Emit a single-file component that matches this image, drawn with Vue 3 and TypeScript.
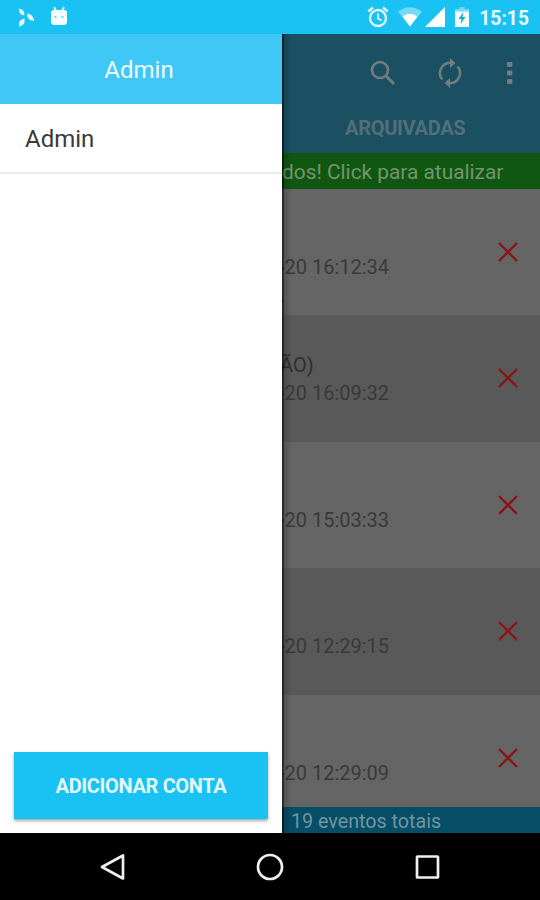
<script setup lang="ts">
interface EventRow {
  title: string
  date: string
  note: string
}

const events: EventRow[] = [
  { title: '', date: '-20 16:12:34', note: '.' },
  { title: 'ÃO)', date: '-20 16:09:32', note: '' },
  { title: '', date: '-20 15:03:33', note: '' },
  { title: '', date: '-20 12:29:15', note: '' },
  { title: '', date: '-20 12:29:09', note: '' },
]
</script>

<template>
  <div class="screen">
    <header class="status">
      <svg class="pinwheel" viewBox="0 0 17 19" width="17" height="19" fill="#e2f8ff">
        <path d="M.8 .5L4 1.500Q6.800 3.500 6.300 7.500L3 6.500Q.8 4.500 .8 .5Z" />
        <path d="M9 5.500L12.500 6.500Q16 9 16 13L12.500 12.300Q9 10 9 5.500Z" />
        <path d="M1 18.500V14.500Q2.500 11 6.500 10.500V14.500Q5 18 1 18.500Z" />
      </svg>
      <svg class="robot" viewBox="0 0 18 20" width="18" height="20">
        <path d="M4 1l2 4M14 1l-2 4" stroke="#c8f2ff" stroke-width="2" />
        <path d="M1 6.500Q1 4 4 4H14Q17 4 17 6.500V15.500Q17 19 13.500 19H4.500Q1 19 1 15.500Z" fill="#f4fdff" />
        <circle cx="5.500" cy="11" r="1.100" fill="#5ccff2" />
        <circle cx="12.500" cy="11" r="1.100" fill="#5ccff2" />
      </svg>
      <div class="status-right">
        <svg viewBox="0 0 22 22" width="22" height="22" fill="none" stroke="#e2f8ff">
          <circle cx="11" cy="12" r="8" stroke-width="2.300" />
          <path d="M11 7.500v5l3.500 2" stroke-width="1.800" />
          <path d="M1.300 5.500L6 1.500M20.700 5.500L16 1.500" stroke-width="2.400" />
        </svg>
        <svg class="wifi" viewBox="0 0 24 20" width="24" height="20">
          <path d="M0 4.500Q12-4 24 4.500L12 19.500Z" fill="#75daf8" />
          <path d="M4.500 9.500Q12 4 19.500 9.500L12 19.500Z" fill="#fff" />
        </svg>
        <svg class="signal" viewBox="0 0 20 20" width="20" height="20">
          <path d="M20 0V20H0Z" fill="#fff" />
        </svg>
        <svg class="battery" viewBox="0 0 14 20" width="14" height="20">
          <path d="M4.500 0h5v2H14V6H0V2h4.500Z" fill="#75daf8" />
          <path d="M0 4.500H14V20H0Z" fill="#f4fdff" />
          <path d="M8.500 5L3.500 12H6.500L5.500 17L10.500 10H7.500Z" fill="#19a9d5" />
        </svg>
        <span class="clock">15:15</span>
      </div>
    </header>

    <main class="body">
      <aside class="drawer">
        <div class="drawer-head">Admin</div>
        <div class="account">Admin</div>
        <div class="grow"></div>
        <button class="add">ADICIONAR CONTA</button>
      </aside>

      <section class="content">
        <div class="toolbar">
          <div class="actions">
            <svg class="search" viewBox="0 0 26 26" width="26" height="26" fill="none" stroke="#727d80">
              <circle cx="10" cy="10" r="8" stroke-width="2.600" />
              <path d="M15.500 15.500L24 24" stroke-width="3" />
            </svg>
            <svg class="sync" viewBox="0 0 24 30" width="24" height="30">
              <g fill="none" stroke="#727d80" stroke-width="2.600">
                <path d="M4.300 21.500A10.300 10.300 0 0 1 12 4.700H14" />
                <path d="M19.700 8.500A10.300 10.300 0 0 1 12 25.300H10" />
              </g>
              <path d="M12 0L17.500 4.900L12 10ZM12 20L6.500 25.100L12 30Z" fill="#727d80" />
            </svg>
            <svg class="more" viewBox="0 0 6 22" width="6" height="22" fill="#727d80">
              <rect width="5.400" height="5" rx="1" />
              <rect y="8.500" width="5.400" height="5" rx="1" />
              <rect y="17" width="5.400" height="5" rx="1" />
            </svg>
          </div>
          <div class="tab">ARQUIVADAS</div>
        </div>
        <div class="notice">dos! Click para atualizar</div>
        <div class="list">
          <div v-for="event in events" :key="event.date" class="row">
            <div class="text">
              <div class="line title">{{ event.title }}</div>
              <div class="line date">{{ event.date }}</div>
              <div class="line note">{{ event.note }}</div>
            </div>
            <svg viewBox="0 0 20 20" width="20" height="20" fill="none" stroke="#8a1518" stroke-width="2.400">
              <path d="M1 1L19 19M19 1L1 19" />
            </svg>
          </div>
        </div>
        <footer class="total">19 eventos totais</footer>
        <div class="edge"></div>
      </section>
    </main>

    <nav class="nav">
      <svg viewBox="0 0 28 30" width="28" height="30"><path d="M24 3.500V26.500L3 15Z" /></svg>
      <svg viewBox="0 0 28 30" width="28" height="30"><circle cx="14" cy="15" r="12" /></svg>
      <svg viewBox="0 0 28 30" width="28" height="30"><rect x="4" y="4.500" width="21" height="21" rx="0.500" /></svg>
    </nav>
  </div>
</template>

<style>
body {
  margin: 0;
}
</style>

<style scoped>
.screen {
  width: 540px;
  height: 900px;
  display: flex;
  flex-direction: column;
  overflow: hidden;
  font-family: Roboto, "Liberation Sans", sans-serif;
}
svg {
  display: block;
  flex: none;
}
.status {
  height: 34px;
  box-sizing: border-box;
  flex: none;
  display: flex;
  align-items: center;
  padding: 0 11px 0 18px;
  background: #19c2f3;
}
.robot {
  margin: -3px 0 0 15px;
}
.status-right {
  display: flex;
  align-items: center;
  margin-left: auto;
}
.wifi {
  margin-left: 9px;
}
.signal {
  margin-left: 3px;
}
.battery {
  margin-left: 10.500px;
}
.clock {
  margin: 3px 0 0 10px;
  font-size: 19.300px;
  font-weight: 700;
  line-height: 24px;
  color: #e6f9ff;
}
.body {
  flex: none;
  height: 799px;
  display: flex;
}
.drawer {
  width: 282px;
  flex: none;
  display: flex;
  flex-direction: column;
  background: #fff;
}
.drawer-head {
  height: 70px;
  line-height: 72px;
  padding-right: 4px;
  text-align: center;
  font-size: 24px;
  color: #f0fbff;
  background: #3fc8f5;
}
.account {
  height: 68px;
  line-height: 70px;
  padding-left: 25px;
  font-size: 24px;
  color: #3a3a3a;
  border-bottom: 2px solid #ececec;
}
.grow {
  flex: 1;
}
.add {
  height: 67px;
  margin: 0 14px 14px;
  padding: 1px 0 0;
  border: 0;
  background: #19c2f3;
  box-shadow: 0 2px 3px rgba(0, 0, 0, 0.350);
  font-family: inherit;
  font-size: 20px;
  font-weight: 700;
  letter-spacing: -0.350px;
  color: #e2f8ff;
}
.content {
  position: relative;
  flex: 1;
  min-width: 0;
  display: flex;
  flex-direction: column;
  overflow: hidden;
  white-space: nowrap;
}
.toolbar {
  height: 119px;
  flex: none;
  background: #1a5062;
}
.actions {
  height: 79px;
  box-sizing: border-box;
  display: flex;
  align-items: center;
  padding: 0 0 1px 87.500px;
}
.sync {
  margin-left: 42.500px;
}
.more {
  margin-left: 44.500px;
}
.tab {
  height: 28px;
  line-height: 30px;
  padding-left: 63px;
  font-size: 20px;
  font-weight: 700;
  letter-spacing: -0.300px;
  color: #536f78;
}
.notice {
  height: 36px;
  flex: none;
  line-height: 38px;
  font-size: 20.850px;
  color: #75946f;
  background: #105711;
}
.list {
  flex: 1;
  min-height: 0;
  overflow: hidden;
}
.row {
  height: 126.600px;
  box-sizing: border-box;
  display: flex;
  align-items: center;
  justify-content: space-between;
  padding-right: 22px;
  background: #656565;
}
.row:first-child {
  height: 126px;
}
.row:nth-child(even) {
  background: #595959;
}
.text {
  margin-left: -3px;
  padding-top: 30px;
  font-size: 20px;
  line-height: 28px;
  color: #3a3a3a;
}
.line {
  height: 28px;
}
.title {
  padding-left: 1px;
  color: #303030;
}
.note {
  padding-left: 1px;
}
.total {
  height: 26px;
  flex: none;
  line-height: 29px;
  padding-left: 9px;
  font-size: 19.700px;
  color: #7195a1;
  background: #064e66;
}
.edge {
  position: absolute;
  inset: 0 auto 0 0;
  width: 10px;
  background: linear-gradient(to right, rgba(0, 0, 0, 0.600) 0, rgba(0, 0, 0, 0.550) 1.500px, rgba(0, 0, 0, 0.160) 2.500px, transparent);
}
.nav {
  flex: 1;
  display: flex;
  align-items: center;
  justify-content: center;
  gap: 129px;
  background: #000;
}
.nav svg {
  fill: none;
  stroke: #efefef;
  stroke-width: 2.700;
  stroke-linejoin: round;
}
</style>
